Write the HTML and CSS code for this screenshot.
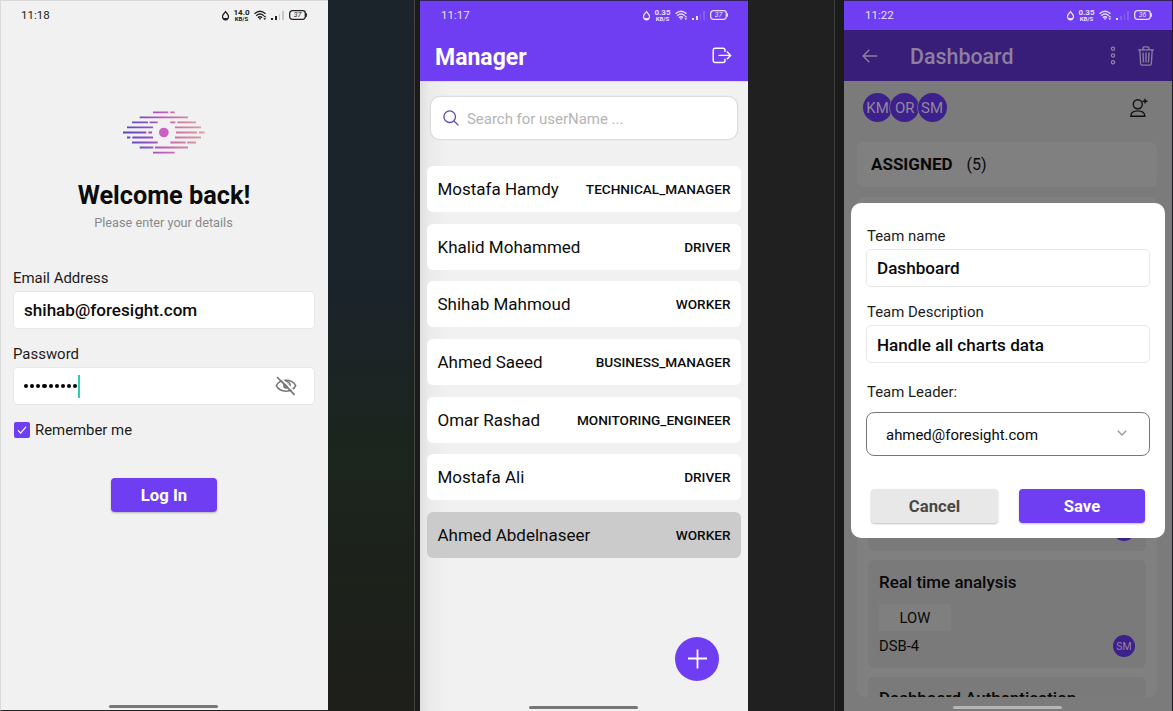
FILE: index.html
```html
<!DOCTYPE html>
<html lang="en">
<head>
<meta charset="utf-8">
<title>Foresight mobile</title>
<link rel="stylesheet" href="styles.css">
</head>
<body>
<svg class="defs" width="0" height="0">
  <symbol id="drop" viewBox="0 0 9 11"><path d="M4.500 1.600C3.500 3 1.500 4.500 1.500 6.600a3 3 0 0 0 6 0C7.500 4.500 5.500 3 4.500 1.600Z" fill="none" stroke="currentColor" stroke-width="1.200"/><path d="M2 8h5A2.500 2.500 0 0 1 2 8Z" fill="currentColor"/></symbol>
  <symbol id="wifi" viewBox="0 0 13 11"><g fill="none" stroke="currentColor" stroke-width="1.400"><path d="M.5 3.700Q6 -1 11.500 3.700M2.200 5.700Q6 2.400 9.800 5.700M3.900 7.600Q6 5.800 8.100 7.600"/></g><path d="M4.600 8.300h2.800L6 10ZM9.300 7.200l1.500-1.600L12.300 7.200ZM9.300 8.300L10.800 10L12.300 8.300Z" fill="currentColor"/></symbol>
  <symbol id="battery" viewBox="0 0 18 10"><rect x=".7" y=".7" width="15.600" height="8.600" rx="2.600" fill="none" stroke="currentColor" stroke-width="1.300"/><path d="M17.300 3.300v3.400" stroke="currentColor" stroke-width="1.300"/></symbol>
</svg>

<main class="board">
  <section class="phone login">
    <header class="status">
      <time class="clock">11:18</time>
      <svg class="s-drop"><use href="#drop"/></svg>
      <span class="speed"><b>14.0</b><i>KB/S</i></span>
      <svg class="s-wifi"><use href="#wifi"/></svg>
      <span class="signal two"><i></i><i></i><i></i><i></i></span>
      <span class="battery"><svg><use href="#battery"/></svg><em>37</em></span>
    </header>
    <svg class="logo" viewBox="369 333 246 129">
      <defs><linearGradient id="lg" gradientUnits="userSpaceOnUse" x1="369" y1="0" x2="615" y2="0"><stop offset="0" stop-color="#5744c4"/><stop offset=".28" stop-color="#8651c0"/><stop offset=".5" stop-color="#c45cb6"/><stop offset=".72" stop-color="#cd7fa2"/><stop offset="1" stop-color="#dba3a8"/></linearGradient></defs>
      <path stroke="url(#lg)" stroke-width="5.500" d="M459 337H505M511 337H524M419 352.010H564M396 367H444M449 367H473M511 367H526M532 367H588M381 382H459M525 382H603M369 397.500H439M445 397.500H456M528 397.500H591M597 397.500H614M381 412.500H391M397 412.500H459M525 412.500H603M396 427.500H473M511 427.500H557M562 427.500H588M419 442.500H460M465 442.500H564M459 458H524"/>
      <circle cx="491.500" cy="397.500" r="14.500" fill="#cb60c3"/>
    </svg>
    <h1>Welcome back!</h1>
    <p class="sub">Please enter your details</p>
    <form class="form">
      <label>Email Address</label>
      <div class="input"><span class="email">shihab@foresight.com</span></div>
      <label class="second">Password</label>
      <div class="input pass">
        <span class="dots"><i></i><i></i><i></i><i></i><i></i><i></i><i></i><i></i><i></i></span><span class="caret"></span>
        <svg class="eye" viewBox="0 0 22 20" fill="none" stroke="#777" stroke-width="1.500"><path d="M1.300 9.600C5 2.300 17 2.300 20.700 9.600C17 17 5 17 1.300 9.600Z"/><path d="M8 6.500A4.200 4.200 0 0 1 15 10.500"/><circle cx="11" cy="9.800" r="2.900" fill="#777" stroke="none"/><path d="M4.500.6L21.600 18" stroke="#fff" stroke-width="1.500"/><path d="M2 1L19.600 18.800" stroke-width="1.700"/></svg>
      </div>
      <div class="remember"><span class="check"><svg viewBox="0 0 15 15"><path d="M3.800 7.800L6.200 10.400L11.200 4.500" fill="none" stroke="#fff" stroke-width="1.200"/></svg></span>Remember me</div>
      <button type="button" class="btn primary">Log In</button>
    </form>
    <div class="home"></div>
  </section>
  <div class="gap scene"></div>
  <section class="phone manager">
    <header class="status">
      <time class="clock">11:17</time>
      <svg class="s-drop"><use href="#drop"/></svg>
      <span class="speed"><b>0.35</b><i>KB/S</i></span>
      <svg class="s-wifi"><use href="#wifi"/></svg>
      <span class="signal two"><i></i><i></i><i></i><i></i></span>
      <span class="battery"><svg><use href="#battery"/></svg><em>37</em></span>
    </header>
    <div class="appbar">
      <h2>Manager</h2>
      <svg class="logout" viewBox="0 0 20 18" fill="none" stroke="#fff" stroke-width="1.400"><path d="M13 5V3.200A2 2 0 0 0 11 1.200H3.200A2 2 0 0 0 1.200 3.200V13.500A2 2 0 0 0 3.200 15.500H11A2 2 0 0 0 13 13.500V11.800M6.500 8.400H18.400M14.800 4.600L18.600 8.400L14.800 12.200"/></svg>
    </div>
    <div class="content">
      <div class="search"><svg viewBox="0 0 16 16" fill="none" stroke="#5a48c0" stroke-width="1.300"><circle cx="6.700" cy="6.700" r="5.800"/><path d="M10.900 11L15.400 15.400"/></svg><span>Search for userName ...</span></div>
      <ul class="users">
        <li><span>Mostafa Hamdy</span><b>TECHNICAL_MANAGER</b></li>
        <li><span>Khalid Mohammed</span><b>DRIVER</b></li>
        <li><span>Shihab Mahmoud</span><b>WORKER</b></li>
        <li><span>Ahmed Saeed</span><b>BUSINESS_MANAGER</b></li>
        <li><span>Omar Rashad</span><b>MONITORING_ENGINEER</b></li>
        <li><span>Mostafa Ali</span><b>DRIVER</b></li>
        <li class="pressed"><span>Ahmed Abdelnaseer</span><b>WORKER</b></li>
      </ul>
    </div>
    <button type="button" class="fab"><svg viewBox="0 0 20 20"><path d="M10.500 .5V19.500M1 9.500H20" stroke="#fff" stroke-width="1.800"/></svg></button>
    <div class="home"></div>
  </section>
  <div class="gap plain"></div>
  <section class="phone team">
    <header class="status">
      <time class="clock">11:22</time>
      <svg class="s-drop"><use href="#drop"/></svg>
      <span class="speed"><b>0.35</b><i>KB/S</i></span>
      <svg class="s-wifi"><use href="#wifi"/></svg>
      <span class="signal one"><i></i><i></i><i></i><i></i></span>
      <span class="battery"><svg><use href="#battery"/></svg><em>36</em></span>
    </header>
    <div class="appbar dim">
      <svg class="back" viewBox="0 0 16 14" fill="none" stroke="#8d809f" stroke-width="1.400"><path d="M15.200 7H1.200M7.300 .8L1.100 7L7.300 13.200"/></svg>
      <h2>Dashboard</h2>
      <svg class="more" viewBox="0 0 6 19" fill="none" stroke="#8d809f" stroke-width="1.300"><circle cx="3" cy="2.700" r="1.600"/><circle cx="3" cy="9.500" r="1.600"/><circle cx="3" cy="16.300" r="1.600"/></svg>
      <svg class="trash" viewBox="0 0 16 20" fill="none" stroke="#8d809f" stroke-width="1.300"><path d="M0 3.900H16M4.800 3.700L5.300 1.500Q5.500.8 6.200.8H9.800Q10.500.8 10.700 1.500L11.200 3.700M1.800 4L2.600 17.500Q2.800 19.200 4.300 19.200H11.700Q13.200 19.200 13.400 17.500L14.200 4M5 6.500L5.500 16.500M8 6.500V16.500M11 6.500L10.500 16.500"/></svg>
    </div>
    <div class="members">
      <span class="avatar">KM</span><span class="avatar">OR</span><span class="avatar">SM</span>
      <svg class="adduser" viewBox="0 0 18 20" fill="none" stroke="#101010" stroke-width="1.400"><circle cx="7.800" cy="6.300" r="4.500"/><path d="M.8 18.200C.8 14.500 3.700 12.900 7.800 12.900S14.800 14.500 14.800 18.200ZM15 .8V5.600M12.600 3.200H17.500"/></svg>
    </div>
    <div class="assigned"><b>ASSIGNED</b><span>(5)</span></div>
    <div class="column">
      <article class="task tall"><span class="avatar small">SM</span></article>
      <article class="task">
        <h3>Real time analysis</h3>
        <span class="tag">LOW</span>
        <div class="taskfoot"><span>DSB-4</span><span class="avatar small">SM</span></div>
      </article>
      <article class="task"><h3>Dashboard Authentication</h3></article>
    </div>
    <div class="modal">
      <label>Team name</label>
      <div class="input">Dashboard</div>
      <label class="second">Team Description</label>
      <div class="input lower">Handle all charts data</div>
      <label class="third">Team Leader:</label>
      <div class="select"><span>ahmed@foresight.com</span><svg viewBox="0 0 10 6"><path d="M.8.8L5 5L9.200.8" fill="none" stroke="#999" stroke-width="1.400"/></svg></div>
      <div class="actions"><button type="button" class="btn cancel">Cancel</button><button type="button" class="btn primary">Save</button></div>
    </div>
    <div class="home"></div>
  </section>
</main>
</body>
</html>
```
FILE: styles.css
```css
* { box-sizing: border-box; }
body { margin: 0; background: #1d1c1e; font-family: Roboto, "Noto Sans", sans-serif; color: #0c0c0c; }
.defs { position: absolute; }
svg { display: block; flex: none; }
h1, h2, h3, p, ul { margin: 0; padding: 0; }
button { border: 0; padding: 0; font-family: inherit; }
.board { display: flex; width: 1173px; height: 711px; overflow: hidden; }
.phone { position: relative; width: 328px; flex: none; background: #f1f1f1; overflow: hidden; display: flex; flex-direction: column; }
.login { border-left: 1px solid #d9d9d9; border-top: 1px solid #d9d9d9; border-bottom: 1px solid #222; }
.gap { flex: none; }
.scene { width: 92px; background: linear-gradient(90deg, transparent 86px, #45463f 86px, #45463f 87px, #1b1c1a 87px), linear-gradient(180deg, #1b232b 0, #1b232a 42%, #1b251e 62%, #1c221b 78%, #1e1e1a 100%); }
.plain { width: 96px; background: linear-gradient(90deg, #202020 86px, #3b3b3b 86px, #3b3b3b 87px, #1b1b1b 87px); }

.status { height: 30px; flex: none; display: flex; align-items: center; padding: 0 20px 1px 21px; color: #222; }
.login .status { height: 29px; padding: 0 21px 1px 20px; }
.manager .status, .team .status { color: #e9e0ff; background: #6f3df2; border-top: 1px solid #32205c; }
.clock { font-size: 11.500px; line-height: 14px; margin-right: auto; }
.s-drop { width: 9px; height: 11px; }
.s-wifi { width: 13px; height: 11px; margin-left: 5px; }
.speed { width: 15px; margin-left: 4px; display: flex; flex-direction: column; align-items: center; }
.speed b, .speed i { font: 700 8px/6px Roboto, sans-serif; white-space: nowrap; }
.speed i { font-size: 6px; line-height: 5px; }
.signal { display: flex; align-items: flex-end; gap: 2px; height: 9px; margin-left: 4px; width: 13px; }
.signal i { width: 1.750px; background: currentColor; }
.signal i:nth-child(1) { height: 2px; }
.signal i:nth-child(2) { height: 4px; }
.signal i:nth-child(3) { height: 6px; opacity: .2; }
.signal i:nth-child(4) { height: 9px; opacity: .2; }
.signal.one i:nth-child(2) { opacity: .2; }
.battery { position: relative; width: 18px; height: 10px; margin-left: 5px; }
.battery svg { width: 18px; height: 10px; }
.battery em { position: absolute; left: 0; top: 0; width: 17px; text-align: center; font: italic 400 7px/10px Roboto, sans-serif; }

.home { position: absolute; left: 109px; bottom: 2px; width: 109px; height: 3px; border-radius: 2px; background: #777; }
.login .home { left: 108px; bottom: 2px; }
.team .home { background: #b5b5b5; }

.logo { width: 82px; height: 43px; margin: 81px 0 0 122px; }
h1 { text-align: center; font-size: 25.300px; line-height: 34px; font-weight: 700; margin: 25px 1px 0 0; }
.sub { text-align: center; color: #8a8a8a; font-size: 12.700px; line-height: 20px; margin-right: 2px; }
.form { padding: 0 13px 0 12px; margin-top: 36px; display: flex; flex-direction: column; }
label { font-size: 14.950px; line-height: 18px; color: #1c1c1c; }
.input { height: 38px; border: 1px solid #e8e8e8; border-radius: 5px; background: #fff; padding: 0 10px; font-size: 17.080px; font-weight: 500; display: flex; align-items: center; }
.form .input { margin-top: 4px; }
.form .second { margin-top: 16px; }
.dots { display: flex; gap: 2px; }
.dots i { width: 4.150px; height: 4px; border-radius: 50%; background: #000; }
.caret { width: 2px; height: 23px; background: #2fcdb0; margin-left: 1px; }
.eye { width: 22px; height: 20px; margin-left: auto; margin-right: 7px; }
.remember { display: flex; align-items: center; gap: 5px; margin: 15px 0 0 1px; height: 20px; font-size: 14.900px; color: #1c1c1c; }
.check { width: 16px; height: 16px; border-radius: 2px; background: #6f3df2; }
.btn { height: 34px; border-radius: 4px; font-size: 16.700px; font-weight: 700; box-shadow: 0 1px 2px rgba(0,0,0,.25); }
.primary { background: #6f3df2; color: #fff; }
.form .btn { width: 106px; align-self: center; margin: 38px 0 0 0; }

.appbar { height: 51px; flex: none; display: flex; align-items: center; background: #6f3df2; color: #fff; padding: 0 16px 0 15px; }
.appbar h2 { font-size: 23px; font-weight: 700; line-height: 30px; margin-top: 5px; }
.logout { width: 20px; height: 18px; margin-left: auto; }
.content { flex: 1; padding: 14px 7px 0; background: linear-gradient(90deg, #dedede 0, #eaeaea 8px, #f1f1f1 28px); border-top: 1px solid #ddd; }
.search { height: 44px; margin: 0 3px; border: 1px solid #ddd; border-radius: 10px; background: #fff; display: flex; align-items: center; padding-left: 12px; font-size: 14.950px; color: #b5b5b5; box-shadow: 0 0 1px #ccc; }
.search span { padding-top: 1px; }
.search svg { width: 16px; height: 16px; margin-right: 8px; }
.users { list-style: none; display: flex; flex-direction: column; gap: 11.650px; margin-top: 26px; }
.users li { height: 46px; border-radius: 6px; background: #fff; display: flex; align-items: center; justify-content: space-between; padding: 0 10.500px; font-size: 17px; }
.users b { font-size: 13.620px; font-weight: 500; }
.users .pressed { background: #cbcbcb; }
.fab { position: absolute; left: 255px; top: 637px; width: 44px; height: 44px; border-radius: 50%; background: #6f3df2; display: grid; place-items: center; }
.fab svg { width: 20px; height: 20px; }

.team { background: #7b7b7b; color: #090909; }
.dim { background: #381e79; color: #8d809f; padding: 0 18px; }
.back { width: 16px; height: 14px; margin-right: 32px; }
.appbar.dim h2 { font-size: 21.400px; font-weight: 500; margin-top: 3px; }
.more { width: 6px; height: 19px; margin-left: auto; margin-right: 22px; }
.trash { width: 16px; height: 20px; }
.members { height: 61px; flex: none; display: flex; align-items: center; padding: 0 24px 8px 19px; }
.avatar { width: 29px; height: 29px; border-radius: 50%; background: #3c208b; color: #92869e; display: grid; place-items: center; font-size: 15px; flex: none; margin-right: -1.750px; }
.members .avatar + .avatar { box-shadow: 0 0 0 .7px #7b7b7b; }
.avatar.small { width: 22px; height: 22px; font-size: 10.500px; margin: 0; }
.adduser { width: 18px; height: 20px; margin-left: auto; }
.assigned { flex: none; height: 45px; margin: 0 15px 0 13px; border-radius: 7px; background: #808080; display: flex; align-items: center; gap: 14px; padding-left: 14px; font-size: 16px; }
.assigned b { font-weight: 700; font-size: 17px; padding-bottom: 1px; }
.column { height: 500px; flex: none; margin: 10px 15px 0 13px; padding: 11px; border-radius: 8px; background: #808080; display: flex; flex-direction: column; gap: 9px; overflow: hidden; }
.task { flex: none; background: #7a7a7a; border-radius: 6px; height: 108px; padding: 11px 11px; display: flex; flex-direction: column; align-items: flex-start; }
.tall { height: 343px; justify-content: flex-end; align-items: flex-end; padding-bottom: 10px; }
.task h3 { font-size: 16.950px; line-height: 22px; font-weight: 500; }
.task:last-child h3 { margin-top: -1px; }
.tag { width: 72px; height: 28px; background: #7f7f7f; border-radius: 2px; margin-top: 11px; display: grid; place-items: center; font-size: 14.800px; }
.taskfoot { width: 100%; display: flex; justify-content: space-between; align-items: center; font-size: 14.800px; margin-top: 4px; }

.modal { position: absolute; left: 7px; top: 203px; width: 314px; height: 335px; border-radius: 10px; background: #fff; padding: 24px 15px 0; display: flex; flex-direction: column; }
.modal label { margin-left: 1px; }
.modal .input { margin-top: 4px; height: 38px; }
.modal .lower { padding-top: 2px; }
.modal .second { margin-top: 16px; }
.modal .third { margin-top: 20px; }
.select { height: 44px; margin-top: 11px; border: 1px solid #777; border-radius: 8px; display: flex; align-items: center; justify-content: space-between; padding: 2px 22px 0 19px; font-size: 14.950px; }
.select svg { width: 10px; height: 6px; margin-top: -4px; }
.actions { display: flex; justify-content: space-between; padding: 0 5px; margin-top: 33px; }
.actions .btn { width: 127px; }
.actions .primary { width: 126px; }
.cancel { background: #e8e8e8; color: #484848; }
```
